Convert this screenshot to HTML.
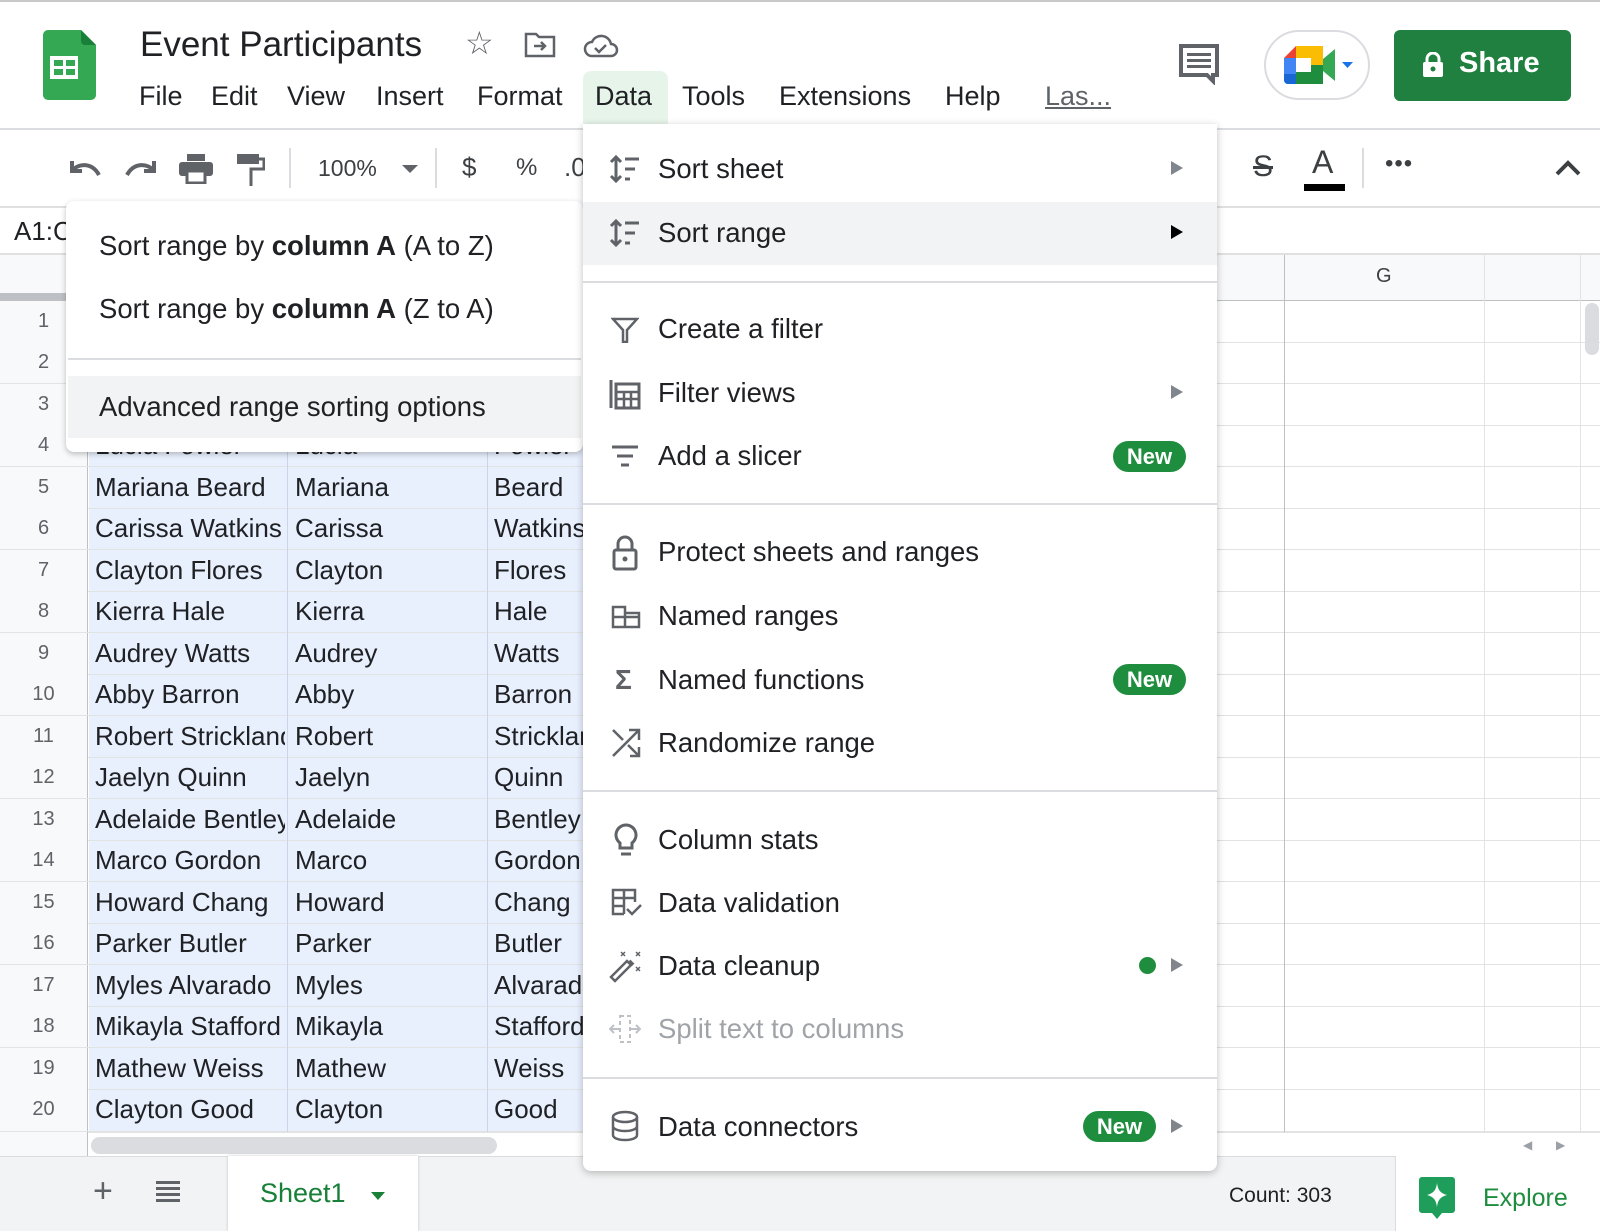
<!DOCTYPE html>
<html><head><meta charset="utf-8">
<style>
*{margin:0;padding:0;box-sizing:border-box}
body{width:1600px;height:1231px;overflow:hidden;background:#fff;font-family:"Liberation Sans",Arial,sans-serif;color:#202124;position:relative}
.a{position:absolute}
.t{position:absolute;white-space:nowrap}
.menu{font-size:27.5px;color:#202124}
.row{position:absolute;left:0;width:1600px;height:42px;border-bottom:1px solid #e2e3e3}
.row .n{position:absolute;left:0;top:0;width:88px;height:41px;text-align:center;font-size:20px;color:#5f6368;line-height:41px;background:#f8f9fa;border-right:1px solid #c0c0c0}
.row .c{position:absolute;top:0;font-size:26px;white-space:nowrap;line-height:41px;overflow:hidden;height:41px}
.new{position:absolute;width:73px;height:31px;border-radius:16px;background:#1e8e3e;color:#fff;font-weight:bold;font-size:22px;text-align:center;line-height:31px}
.arr{position:absolute;width:0;height:0;border-top:7px solid transparent;border-bottom:7px solid transparent;border-left:12px solid #80868b}
.sep{position:absolute;left:583px;width:634px;height:2px;background:#dadce0}
</style></head><body>
<div class="a" style="left:0;top:0;width:1600px;height:2px;background:#c8c8c8"></div>
<svg class="a" style="left:43px;top:29px" width="54" height="72" viewBox="0 0 54 72"><path d="M5 1h33l15 15v50a5 5 0 0 1-5 5H5a5 5 0 0 1-5-5V6a5 5 0 0 1 5-5z" fill="#34a853"/><path d="M38 1l15 15H42a4 4 0 0 1-4-4z" fill="#188038"/><rect x="7" y="27" width="28" height="23" fill="#fff"/><rect x="11" y="31" width="9" height="6" fill="#34a853"/><rect x="23" y="31" width="9" height="6" fill="#34a853"/><rect x="11" y="40" width="9" height="6" fill="#34a853"/><rect x="23" y="40" width="9" height="6" fill="#34a853"/></svg>
<div class="t" style="left:140px;top:25px;font-size:35px">Event Participants</div>
<div class="t" style="left:465px;top:24px;font-size:32px;color:#5f6368">☆</div>
<svg class="a" style="left:524px;top:31px" width="32" height="28" viewBox="0 0 32 28"><path d="M2 3h10l3 3h15v19H2z" fill="none" stroke="#5f6368" stroke-width="2.5"/><path d="M10 15h11M17 11l4 4-4 4" fill="none" stroke="#5f6368" stroke-width="2.5"/></svg>
<svg class="a" style="left:583px;top:31px" width="36" height="28" viewBox="0 0 36 28"><path d="M9 25a7 7 0 0 1 0-14 10 10 0 0 1 19 2 6 6 0 0 1 0 12z" fill="none" stroke="#5f6368" stroke-width="2.5"/><path d="M12 17l4 4 7-7" fill="none" stroke="#5f6368" stroke-width="2.5"/></svg>
<div class="a" style="left:583px;top:71px;width:85px;height:55px;background:#e6f4ea;border-radius:8px 8px 0 0"></div>
<div class="t" style="left:139px;top:81px;font-size:27px">File</div>
<div class="t" style="left:211px;top:81px;font-size:27px">Edit</div>
<div class="t" style="left:287px;top:81px;font-size:27px">View</div>
<div class="t" style="left:376px;top:81px;font-size:27px">Insert</div>
<div class="t" style="left:477px;top:81px;font-size:27px">Format</div>
<div class="t" style="left:595px;top:81px;font-size:27px">Data</div>
<div class="t" style="left:682px;top:81px;font-size:27px">Tools</div>
<div class="t" style="left:779px;top:81px;font-size:27px">Extensions</div>
<div class="t" style="left:945px;top:81px;font-size:27px">Help</div>
<div class="t" style="left:1045px;top:81px;font-size:27px;color:#5f6368;text-decoration:underline">Las...</div>
<svg class="a" style="left:1178px;top:43px" width="42" height="42" viewBox="0 0 42 42"><path d="M3 3h36v29l-4 0v6l-6-6H3z" fill="none" stroke="#5f6368" stroke-width="4"/><rect x="9" y="10" width="24" height="3" fill="#5f6368"/><rect x="9" y="16" width="24" height="3" fill="#5f6368"/><rect x="9" y="22" width="24" height="3" fill="#5f6368"/></svg>
<div class="a" style="left:1264px;top:30px;width:106px;height:70px;border:2px solid #dadce0;border-radius:35px"></div>
<svg class="a" style="left:1284px;top:46px" width="75" height="38" viewBox="0 0 75 38"><path d="M12 0h27v38H12z" fill="#1e8e3e"/><path d="M12 0h27v19H12z" fill="#fbbc04"/><path d="M0 12L12 0v12z" fill="#ea4335"/><path d="M0 12h12v26H4a4 4 0 0 1-4-4z" fill="#4285f4"/><path d="M0 28h12v10H4a4 4 0 0 1-4-4z" fill="#1967d2"/><rect x="12" y="12" width="15" height="14" fill="#fff"/><path d="M39 13l12-10v32L39 25z" fill="#34a853"/><path d="M58 16h11l-5.5 6z" fill="#1a73e8"/></svg>
<div class="a" style="left:1394px;top:30px;width:177px;height:71px;border-radius:6px;background:#208040"></div>
<svg class="a" style="left:1422px;top:52px" width="22" height="25" viewBox="0 0 22 25"><path d="M5 11V7a6 6 0 0 1 12 0v4" fill="none" stroke="#fff" stroke-width="3"/><rect x="1" y="10" width="20" height="15" rx="2" fill="#fff"/><circle cx="11" cy="17" r="2.5" fill="#208040"/></svg>
<div class="t" style="left:1459px;top:47px;font-size:29px;color:#fff;font-weight:bold">Share</div>
<div class="a" style="left:0;top:128px;width:1600px;height:2px;background:#dadce0"></div>
<svg class="a" style="left:67px;top:155px" width="36" height="26" viewBox="0 0 36 26"><path d="M5 6v10h10" fill="none" stroke="#5f6368" stroke-width="4"/><path d="M5 16c6-8 20-9 27 4" fill="none" stroke="#5f6368" stroke-width="4"/></svg>
<svg class="a" style="left:123px;top:155px" width="36" height="26" viewBox="0 0 36 26"><path d="M31 6v10H21" fill="none" stroke="#5f6368" stroke-width="4"/><path d="M31 16c-6-8-20-9-27 4" fill="none" stroke="#5f6368" stroke-width="4"/></svg>
<svg class="a" style="left:179px;top:154px" width="34" height="30" viewBox="0 0 34 30"><rect x="8" y="0" width="18" height="7" fill="#5f6368"/><rect x="0" y="8" width="34" height="14" rx="3" fill="#5f6368"/><rect x="8" y="17" width="18" height="12" fill="#fff" stroke="#5f6368" stroke-width="3"/></svg>
<svg class="a" style="left:237px;top:154px" width="28" height="32" viewBox="0 0 28 32"><rect x="0" y="0" width="22" height="10" fill="#5f6368"/><path d="M22 5h5v10H14v17" fill="none" stroke="#5f6368" stroke-width="3"/></svg>
<div class="a" style="left:289px;top:148px;width:2px;height:40px;background:#dadce0"></div>
<div class="t" style="left:318px;top:155px;font-size:23px;color:#3c4043">100%</div>
<div class="a" style="left:402px;top:165px;border-left:8px solid transparent;border-right:8px solid transparent;border-top:8px solid #5f6368"></div>
<div class="a" style="left:435px;top:148px;width:2px;height:40px;background:#dadce0"></div>
<div class="t" style="left:462px;top:152px;font-size:26px;color:#3c4043">$</div>
<div class="t" style="left:516px;top:154px;font-size:24px;color:#3c4043">%</div>
<div class="t" style="left:564px;top:152px;font-size:26px;color:#3c4043">.0</div>
<div class="t" style="left:1253px;top:150px;font-size:30px;color:#3c4043;text-decoration:line-through">S</div>
<div class="t" style="left:1312px;top:144px;font-size:32px;color:#3c4043">A</div>
<div class="a" style="left:1304px;top:184px;width:41px;height:7px;background:#000"></div>
<div class="a" style="left:1362px;top:148px;width:2px;height:40px;background:#dadce0"></div>
<div class="t" style="left:1385px;top:150px;font-size:24px;color:#3c4043;letter-spacing:1px">•••</div>
<svg class="a" style="left:1555px;top:160px" width="26" height="16" viewBox="0 0 26 16"><path d="M2 14L13 3l11 11" fill="none" stroke="#3c4043" stroke-width="4"/></svg>
<div class="a" style="left:0;top:206px;width:1600px;height:2px;background:#e0e0e0"></div>
<div class="t" style="left:14px;top:216px;font-size:26px">A1:C</div>
<div class="a" style="left:0;top:253px;width:1600px;height:2px;background:#e0e0e0"></div>
<div class="a" style="left:0;top:255px;width:1600px;height:46px;background:#f8f9fa"></div>
<div class="a" style="left:0;top:293px;width:88px;height:8px;background:#bdc1c6"></div>
<div class="t" style="left:1376px;top:265px;font-size:20px;color:#3c4043">G</div>
<div class="a" style="left:0;top:300px;width:1600px;height:1px;background:#c0c0c0"></div>
<div class="a" style="left:89px;top:426px;width:500px;height:706px;background:#e8f0fe"></div>

<div class="row" style="top:301px"><div class="n">1</div></div>
<div class="row" style="top:342px"><div class="n">2</div></div>
<div class="row" style="top:384px"><div class="n">3</div></div>
<div class="row" style="top:425px"><div class="n">4</div><div class="c" style="left:95px;width:190px">Lucia Fowler</div><div class="c" style="left:295px;width:190px">Lucia</div><div class="c" style="left:494px;width:90px">Fowler</div></div>
<div class="row" style="top:467px"><div class="n">5</div><div class="c" style="left:95px;width:190px">Mariana Beard</div><div class="c" style="left:295px;width:190px">Mariana</div><div class="c" style="left:494px;width:90px">Beard</div></div>
<div class="row" style="top:508px"><div class="n">6</div><div class="c" style="left:95px;width:190px">Carissa Watkins</div><div class="c" style="left:295px;width:190px">Carissa</div><div class="c" style="left:494px;width:90px">Watkins</div></div>
<div class="row" style="top:550px"><div class="n">7</div><div class="c" style="left:95px;width:190px">Clayton Flores</div><div class="c" style="left:295px;width:190px">Clayton</div><div class="c" style="left:494px;width:90px">Flores</div></div>
<div class="row" style="top:591px"><div class="n">8</div><div class="c" style="left:95px;width:190px">Kierra Hale</div><div class="c" style="left:295px;width:190px">Kierra</div><div class="c" style="left:494px;width:90px">Hale</div></div>
<div class="row" style="top:633px"><div class="n">9</div><div class="c" style="left:95px;width:190px">Audrey Watts</div><div class="c" style="left:295px;width:190px">Audrey</div><div class="c" style="left:494px;width:90px">Watts</div></div>
<div class="row" style="top:674px"><div class="n">10</div><div class="c" style="left:95px;width:190px">Abby Barron</div><div class="c" style="left:295px;width:190px">Abby</div><div class="c" style="left:494px;width:90px">Barron</div></div>
<div class="row" style="top:716px"><div class="n">11</div><div class="c" style="left:95px;width:190px">Robert Strickland</div><div class="c" style="left:295px;width:190px">Robert</div><div class="c" style="left:494px;width:90px">Strickland</div></div>
<div class="row" style="top:757px"><div class="n">12</div><div class="c" style="left:95px;width:190px">Jaelyn Quinn</div><div class="c" style="left:295px;width:190px">Jaelyn</div><div class="c" style="left:494px;width:90px">Quinn</div></div>
<div class="row" style="top:799px"><div class="n">13</div><div class="c" style="left:95px;width:190px">Adelaide Bentley</div><div class="c" style="left:295px;width:190px">Adelaide</div><div class="c" style="left:494px;width:90px">Bentley</div></div>
<div class="row" style="top:840px"><div class="n">14</div><div class="c" style="left:95px;width:190px">Marco Gordon</div><div class="c" style="left:295px;width:190px">Marco</div><div class="c" style="left:494px;width:90px">Gordon</div></div>
<div class="row" style="top:882px"><div class="n">15</div><div class="c" style="left:95px;width:190px">Howard Chang</div><div class="c" style="left:295px;width:190px">Howard</div><div class="c" style="left:494px;width:90px">Chang</div></div>
<div class="row" style="top:923px"><div class="n">16</div><div class="c" style="left:95px;width:190px">Parker Butler</div><div class="c" style="left:295px;width:190px">Parker</div><div class="c" style="left:494px;width:90px">Butler</div></div>
<div class="row" style="top:965px"><div class="n">17</div><div class="c" style="left:95px;width:190px">Myles Alvarado</div><div class="c" style="left:295px;width:190px">Myles</div><div class="c" style="left:494px;width:90px">Alvarado</div></div>
<div class="row" style="top:1006px"><div class="n">18</div><div class="c" style="left:95px;width:190px">Mikayla Stafford</div><div class="c" style="left:295px;width:190px">Mikayla</div><div class="c" style="left:494px;width:90px">Stafford</div></div>
<div class="row" style="top:1048px"><div class="n">19</div><div class="c" style="left:95px;width:190px">Mathew Weiss</div><div class="c" style="left:295px;width:190px">Mathew</div><div class="c" style="left:494px;width:90px">Weiss</div></div>
<div class="row" style="top:1089px;height:43px"><div class="n" style="height:42px">20</div><div class="c" style="left:95px;width:190px">Clayton Good</div><div class="c" style="left:295px;width:190px">Clayton</div><div class="c" style="left:494px;width:90px">Good</div></div>

<div class="a" style="left:287px;top:426px;width:1px;height:706px;background:#c9d6ea"></div>
<div class="a" style="left:487px;top:426px;width:1px;height:706px;background:#c9d6ea"></div>
<div class="a" style="left:1284px;top:255px;width:1px;height:877px;background:#c0c0c0"></div>
<div class="a" style="left:1484px;top:255px;width:1px;height:877px;background:#e2e3e3"></div>
<div class="a" style="left:1580px;top:255px;width:1px;height:877px;background:#e2e3e3"></div>
<div class="a" style="left:1585px;top:303px;width:14px;height:52px;background:#dadce0;border-radius:7px"></div>
<div class="a" style="left:0;top:1132px;width:1600px;height:24px;background:#fff;border-top:1px solid #e2e3e3"></div>
<div class="a" style="left:0;top:1132px;width:88px;height:24px;background:#f8f9fa;border-right:1px solid #c0c0c0"></div>
<div class="a" style="left:91px;top:1137px;width:406px;height:17px;background:#dadce0;border-radius:9px"></div>
<div class="t" style="left:1523px;top:1138px;font-size:12px;color:#9aa0a6">◀</div>
<div class="t" style="left:1556px;top:1138px;font-size:12px;color:#9aa0a6">▶</div>
<div class="a" style="left:0;top:1156px;width:1600px;height:75px;background:#f1f3f4;border-top:1px solid #dadce0"></div>
<div class="t" style="left:93px;top:1172px;font-size:34px;color:#5f6368">+</div>
<div class="a" style="left:156px;top:1181px;width:24px;height:3px;background:#5f6368;box-shadow:0 6px 0 #5f6368,0 12px 0 #5f6368,0 18px 0 #5f6368"></div>
<div class="a" style="left:228px;top:1156px;width:190px;height:75px;background:#fff;box-shadow:0 0 3px rgba(0,0,0,.2)"></div>
<div class="t" style="left:260px;top:1178px;font-size:27px;color:#188038">Sheet1</div>
<div class="a" style="left:371px;top:1192px;border-left:7px solid transparent;border-right:7px solid transparent;border-top:8px solid #188038"></div>
<div class="t" style="left:1229px;top:1184px;font-size:21px;color:#202124">Count: 303</div>
<div class="a" style="left:1395px;top:1156px;width:205px;height:75px;background:#fff;border-left:1px solid #dadce0"></div>
<svg class="a" style="left:1419px;top:1177px" width="36" height="43" viewBox="0 0 36 43"><path d="M3 0h30a3 3 0 0 1 3 3v30a3 3 0 0 1-3 3H23l-5 6-5-6H3a3 3 0 0 1-3-3V3a3 3 0 0 1 3-3z" fill="#1e9e5a"/><path d="M18 6c1 7 3 10 10 12-7 2-9 5-10 12-1-7-3-10-10-12 7-2 9-5 10-12z" fill="#fff"/></svg>
<div class="t" style="left:1483px;top:1184px;font-size:25px;color:#1e8e3e">Explore</div>

<div class="a" style="left:66px;top:201px;width:517px;height:251px;background:#fff;border-radius:8px;box-shadow:0 2px 6px rgba(0,0,0,.25)"></div>
<div class="t menu" style="left:99px;top:230px">Sort range by <b>column A</b> (A to Z)</div>
<div class="t menu" style="left:99px;top:293px">Sort range by <b>column A</b> (Z to A)</div>
<div class="a" style="left:68px;top:358px;width:513px;height:2px;background:#dadce0"></div>
<div class="a" style="left:68px;top:376px;width:513px;height:62px;background:#f1f3f4"></div>
<div class="t menu" style="left:99px;top:391px">Advanced range sorting options</div>

<div class="a" style="left:583px;top:124px;width:634px;height:1047px;background:#fff;border-radius:0 0 8px 8px;box-shadow:0 2px 8px rgba(0,0,0,.25)"></div>
<div class="a" style="left:583px;top:202px;width:634px;height:63px;background:#f1f3f4"></div>
<svg class="a" style="left:608px;top:155px" width="34" height="28" viewBox="0 0 34 28"><path d="M8 2v24M3 7l5-5 5 5M3 21l5 5 5-5" fill="none" stroke="#5f6368" stroke-width="3"/><path d="M17 4h14M17 14h10M17 24h5" stroke="#5f6368" stroke-width="3"/></svg>
<div class="t menu" style="left:658px;top:153px">Sort sheet</div>
<div class="arr" style="left:1171px;top:161px"></div>
<svg class="a" style="left:608px;top:219px" width="34" height="28" viewBox="0 0 34 28"><path d="M8 2v24M3 7l5-5 5 5M3 21l5 5 5-5" fill="none" stroke="#5f6368" stroke-width="3"/><path d="M17 4h14M17 14h10M17 24h5" stroke="#5f6368" stroke-width="3"/></svg>
<div class="t menu" style="left:658px;top:217px">Sort range</div>
<div class="arr" style="left:1171px;top:225px;border-left-color:#000"></div>
<div class="sep" style="top:281px"></div>
<svg class="a" style="left:611px;top:317px" width="28" height="26" viewBox="0 0 28 26"><path d="M2 2h24L16 13v12h-4V13z" fill="none" stroke="#5f6368" stroke-width="2.5"/></svg>
<div class="t menu" style="left:658px;top:313px">Create a filter</div>
<svg class="a" style="left:609px;top:378px" width="32" height="32" viewBox="0 0 32 32"><path d="M2 2v28" stroke="#5f6368" stroke-width="3"/><rect x="7" y="6" width="23" height="24" fill="none" stroke="#5f6368" stroke-width="3"/><path d="M8 14h22M8 21h22M15 14v16M22 14v16" stroke="#5f6368" stroke-width="2.5"/></svg>
<div class="t menu" style="left:658px;top:377px">Filter views</div>
<div class="arr" style="left:1171px;top:385px"></div>
<svg class="a" style="left:611px;top:445px" width="28" height="22" viewBox="0 0 28 22"><path d="M1 2h26M6 11h16M10 20h8" stroke="#5f6368" stroke-width="3"/></svg>
<div class="t menu" style="left:658px;top:440px">Add a slicer</div>
<div class="new" style="left:1113px;top:441px">New</div>
<div class="sep" style="top:503px"></div>
<svg class="a" style="left:612px;top:535px" width="26" height="36" viewBox="0 0 26 36"><path d="M6 15V9a7 7 0 0 1 14 0v6" fill="none" stroke="#5f6368" stroke-width="3"/><rect x="2" y="15" width="22" height="19" rx="2" fill="none" stroke="#5f6368" stroke-width="3"/><circle cx="13" cy="24" r="2.5" fill="#5f6368"/></svg>
<div class="t menu" style="left:658px;top:536px">Protect sheets and ranges</div>
<svg class="a" style="left:611px;top:605px" width="30" height="24" viewBox="0 0 30 24"><path d="M2 2h12v20H2zM14 8h14v14H14M2 12h26" fill="none" stroke="#5f6368" stroke-width="2.5"/></svg>
<div class="t menu" style="left:658px;top:600px">Named ranges</div>
<div class="t" style="left:615px;top:664px;font-size:28px;color:#5f6368;font-weight:bold">Σ</div>
<div class="t menu" style="left:658px;top:664px">Named functions</div>
<div class="new" style="left:1113px;top:664px">New</div>
<svg class="a" style="left:611px;top:728px" width="30" height="30" viewBox="0 0 30 30"><path d="M2 28L28 2M18 2h10v10M2 2l10 10M17 17l11 11M28 19v9h-9" fill="none" stroke="#5f6368" stroke-width="2.5"/></svg>
<div class="t menu" style="left:658px;top:727px">Randomize range</div>
<div class="sep" style="top:790px"></div>
<svg class="a" style="left:613px;top:823px" width="26" height="34" viewBox="0 0 26 34"><path d="M13 2a10 10 0 0 0-6 18v5h12v-5a10 10 0 0 0-6-18z" fill="none" stroke="#5f6368" stroke-width="3"/><path d="M8 31h10" stroke="#5f6368" stroke-width="3"/></svg>
<div class="t menu" style="left:658px;top:824px">Column stats</div>
<svg class="a" style="left:611px;top:888px" width="32" height="30" viewBox="0 0 32 30"><path d="M13 26H2V2h22v12M2 10h22M2 18h11M13 2v24" fill="none" stroke="#5f6368" stroke-width="2.5"/><path d="M16 21l5 5 9-9" fill="none" stroke="#5f6368" stroke-width="2.5"/></svg>
<div class="t menu" style="left:658px;top:887px">Data validation</div>
<svg class="a" style="left:609px;top:949px" width="34" height="34" viewBox="0 0 34 34"><path d="M4 30l16-16 4 4-16 16z" fill="none" stroke="#5f6368" stroke-width="2.5" transform="translate(-2,-2)"/><path d="M20 12l4 4" stroke="#5f6368" stroke-width="4"/><path d="M12 3l4 4M16 3l-4 4M27 3l4 4M31 3l-4 4M27 18l4 4M31 18l-4 4" stroke="#5f6368" stroke-width="1.5"/></svg>
<div class="t menu" style="left:658px;top:950px">Data cleanup</div>
<div class="a" style="left:1139px;top:957px;width:17px;height:17px;border-radius:50%;background:#1e8e3e"></div>
<div class="arr" style="left:1171px;top:958px"></div>
<svg class="a" style="left:609px;top:1014px" width="32" height="30" viewBox="0 0 32 30"><path d="M11 2h10v26H11z" fill="none" stroke="#bdc1c6" stroke-width="2" stroke-dasharray="4 3"/><path d="M2 15h8M5 11l-4 4 4 4M22 15h8M27 11l4 4-4 4" fill="none" stroke="#bdc1c6" stroke-width="2"/></svg>
<div class="t menu" style="left:658px;top:1013px;color:#a0a4a8">Split text to columns</div>
<div class="sep" style="top:1077px"></div>
<svg class="a" style="left:611px;top:1110px" width="28" height="32" viewBox="0 0 28 32"><ellipse cx="14" cy="7" rx="12" ry="5" fill="none" stroke="#5f6368" stroke-width="2.5"/><path d="M2 7v18c0 3 5 5 12 5s12-2 12-5V7M2 16c0 3 5 5 12 5s12-2 12-5" fill="none" stroke="#5f6368" stroke-width="2.5"/></svg>
<div class="t menu" style="left:658px;top:1111px">Data connectors</div>
<div class="new" style="left:1083px;top:1111px">New</div>
<div class="arr" style="left:1171px;top:1119px"></div>
</body></html>
